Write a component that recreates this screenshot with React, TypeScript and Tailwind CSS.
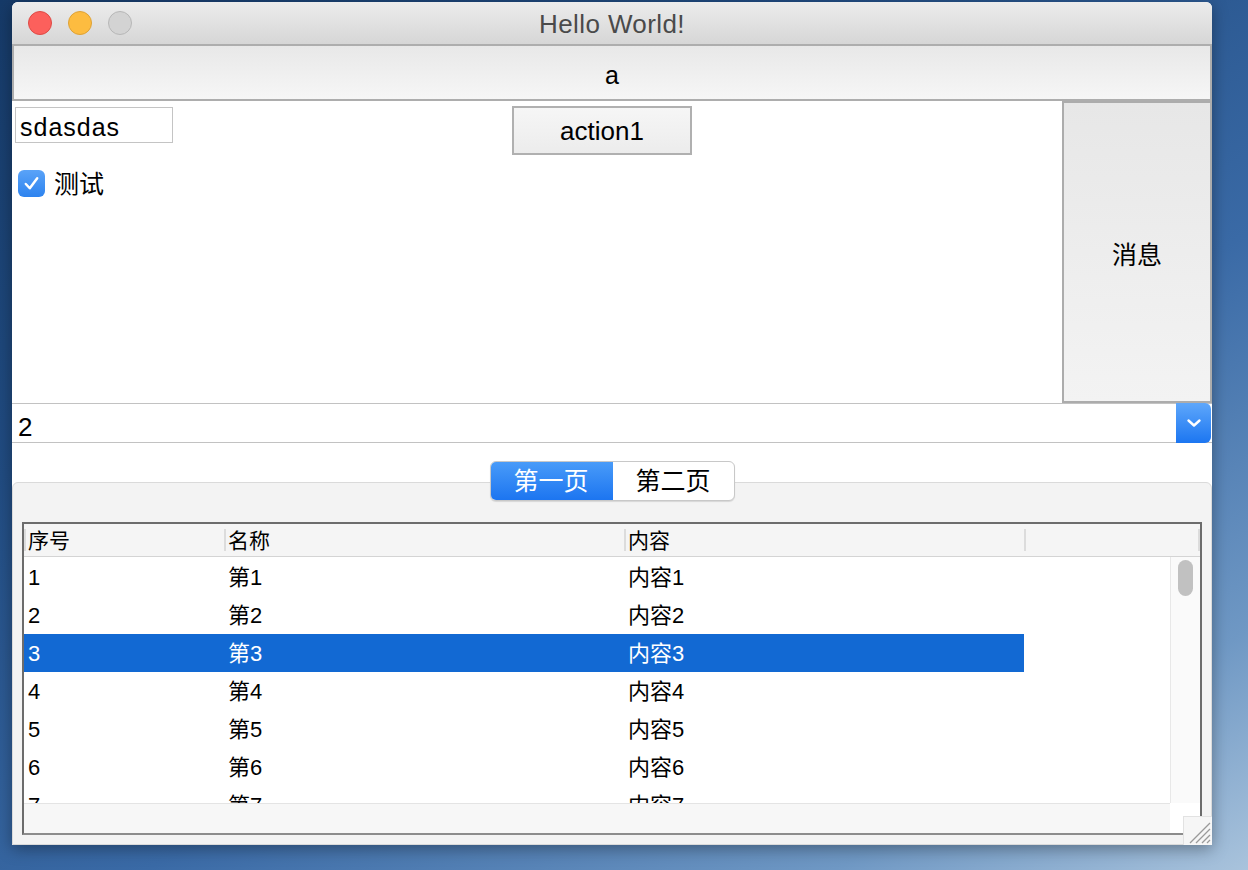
import React from "react";

const F = "font-['Liberation_Sans','Noto_Sans_CJK_SC',sans-serif]";

const rows = [1, 2, 3, 4, 5, 6, 7];

export default function App() {
  return (
    <div
      className={`${F} w-[1248px] h-[870px] overflow-hidden bg-[linear-gradient(150deg,#163a68_0%,#214c82_30%,#3a6aa6_60%,#6f98c4_85%,#a9c3dc_100%)] pl-[12px] pt-[2px]`}
    >
      <div className="relative w-[1200px] h-[843px] flex flex-col bg-white rounded-t-[6px] shadow-[0_4px_16px_rgba(0,0,0,0.35)] overflow-hidden">
        {/* Title bar */}
        <div className="h-[42px] shrink-0 grid grid-cols-[1fr_auto_1fr] items-center bg-[linear-gradient(#ececec,#d6d6d6)]">
          <div className="flex items-center gap-[16px] pl-[16px]">
            <div className="w-[24px] h-[24px] rounded-full bg-[#fc605c] border border-[#de4a45]" />
            <div className="w-[24px] h-[24px] rounded-full bg-[#fdbc40] border border-[#dea236]" />
            <div className="w-[24px] h-[24px] rounded-full bg-[#d3d3d3] border border-[#b7b7b7]" />
          </div>
          <div className="text-[26px] text-[#4a4a4a] leading-none tracking-[0.4px] pt-[2px]">Hello World!</div>
          <div />
        </div>

        {/* Button a */}
        <div className="h-[57px] shrink-0 border-2 border-[#adadad] bg-[linear-gradient(#e8e8e8,#f6f6f6)] flex items-center justify-center pt-[5px] text-[25px] text-black leading-none">
          a
        </div>

        {/* Middle */}
        <div className="h-[302px] shrink-0 flex">
          <div className="flex-1 flex items-start bg-white">
            <div className="w-[500px] pl-[3px] pt-[6px] flex flex-col">
              <div className="w-[158px] h-[36px] border border-[#c4c4c4] flex items-center pl-[4px] pt-[5px] text-[25px] tracking-[1px] text-black leading-none">
                sdasdas
              </div>
              <div className="mt-[27px] ml-[3px] flex items-center gap-[9px]">
                <div className="w-[27px] h-[27px] rounded-[6px] bg-[linear-gradient(#5aa3f8,#2d83ef)] flex items-center justify-center">
                  <svg width="19" height="19" viewBox="0 0 20 20" fill="none">
                    <path d="M4 10.5 L8.2 15 L16 4.5" stroke="white" strokeWidth="2.6" strokeLinecap="round" strokeLinejoin="round" />
                  </svg>
                </div>
                <span className="text-[25px] text-black leading-none pt-[2px]">测试</span>
              </div>
            </div>
            <div className="mt-[5px] w-[180px] h-[49px] border-2 border-[#b0b0b0] bg-[linear-gradient(#f6f6f6,#ececec)] flex items-center justify-center text-[26px] text-black leading-none">
              action1
            </div>
          </div>
          <div className="w-[150px] border-2 border-[#acacac] bg-[linear-gradient(#e7e7e7,#f3f3f3)] flex items-center justify-center pt-[6px] text-[25px] text-black leading-none">
            消息
          </div>
        </div>

        {/* Combo */}
        <div className="h-[40px] shrink-0 flex border-y border-[#c2c2c2] bg-white pr-[1px]">
          <div className="flex-1 flex items-center pl-[6px] pt-[7px] text-[26px] text-black leading-none">2</div>
          <div className="w-[35px] -my-px rounded-r-[6px] bg-[linear-gradient(#5ea7fb,#1c76f1)] flex items-center justify-center">
            <svg width="16" height="10" viewBox="0 0 16 10" fill="none">
              <path d="M2.5 2.5 L8 7.5 L13.5 2.5" stroke="white" strokeWidth="2.4" strokeLinecap="round" strokeLinejoin="round" />
            </svg>
          </div>
        </div>

        {/* Tabs */}
        <div className="relative z-10 mt-[18px] flex justify-center">
          <div className="flex h-[40px] rounded-[6px] border border-[#c8c8c8] bg-white shadow-[0_1px_1px_rgba(0,0,0,0.12)] overflow-hidden">
            <div className="w-[123px] -my-px -ml-px rounded-l-[6px] bg-[linear-gradient(#4a9cf9,#1b74f0)] flex items-center justify-center text-[25px] text-white leading-none">
              第一页
            </div>
            <div className="w-[121px] flex items-center justify-center text-[25px] text-black leading-none">
              第二页
            </div>
          </div>
        </div>

        {/* Pane */}
        <div className="-mt-[19px] flex-1 min-h-0 border border-[#dadada] rounded-t-[6px] bg-[#f3f3f3] px-[9px] pt-[39px] pb-[9px] flex flex-col">
          <div className="flex-1 min-h-0 border-2 border-[#6c6c6c] border-b-[#8c8c8c] bg-white flex flex-col overflow-hidden">
            {/* Header */}
            <div className="h-[33px] shrink-0 flex bg-[#f5f5f5] border-b border-[#d4d4d4] text-[21px] text-black leading-none">
              <div className="w-[200px] flex items-center">
                <div className="w-[2px] h-[22px] bg-[#dcdcdc]" />
                <span className="pl-[2px]">序号</span>
              </div>
              <div className="w-[400px] flex items-center">
                <div className="w-[2px] h-[22px] bg-[#dcdcdc]" />
                <span className="pl-[2px]">名称</span>
              </div>
              <div className="w-[400px] flex items-center">
                <div className="w-[2px] h-[22px] bg-[#dcdcdc]" />
                <span className="pl-[2px]">内容</span>
              </div>
              <div className="flex-1 flex items-center justify-between">
                <div className="w-[2px] h-[22px] bg-[#dcdcdc]" />
                <div className="w-[2px] h-[22px] bg-[#dcdcdc]" />
              </div>
            </div>
            {/* Body */}
            <div className="flex-1 min-h-0 flex overflow-hidden">
              <div className="flex-1 min-h-0 overflow-hidden pt-[1px]">
                {rows.map((n) => {
                  const sel = n === 3;
                  return (
                    <div key={n} className="h-[38px] flex text-[22px] leading-none">
                      <div className={`w-[1000px] flex items-center pt-[1px] ${sel ? "bg-[#1269d3] text-white" : "text-black"}`}>
                        <div className="w-[200px] pl-[4px]">{n}</div>
                        <div className="w-[400px] pl-[4px]">第{n}</div>
                        <div className="w-[400px] pl-[4px]">内容{n}</div>
                      </div>
                    </div>
                  );
                })}
              </div>
              <div className="w-[30px] border-l border-[#e8e8e8] bg-[#fafafa] pt-[3px] flex justify-center">
                <div className="w-[15px] h-[36px] rounded-full bg-[#c1c1c1]" />
              </div>
            </div>
            {/* Horizontal scrollbar */}
            <div className="h-[30px] shrink-0 flex">
              <div className="flex-1 bg-[#f7f7f7] border-t border-[#e4e4e4]" />
              <div className="w-[30px] bg-white" />
            </div>
          </div>
        </div>

        {/* Resize grip */}
        <div className="absolute right-0 bottom-0 w-[29px] h-[29px] bg-[#f6f6f6] border-l border-t border-[#e2e2e2] flex items-end justify-end">
          <svg width="26" height="26" viewBox="0 0 26 26" fill="none">
            <path d="M4 24 L24 4" stroke="#9a9a9a" strokeWidth="1.2" />
            <path d="M10 24 L24 10" stroke="#9a9a9a" strokeWidth="1.2" />
            <path d="M16 24 L24 16" stroke="#9a9a9a" strokeWidth="1.2" />
            <path d="M21 24 L24 21" stroke="#9a9a9a" strokeWidth="1.2" />
          </svg>
        </div>
      </div>
    </div>
  );
}
